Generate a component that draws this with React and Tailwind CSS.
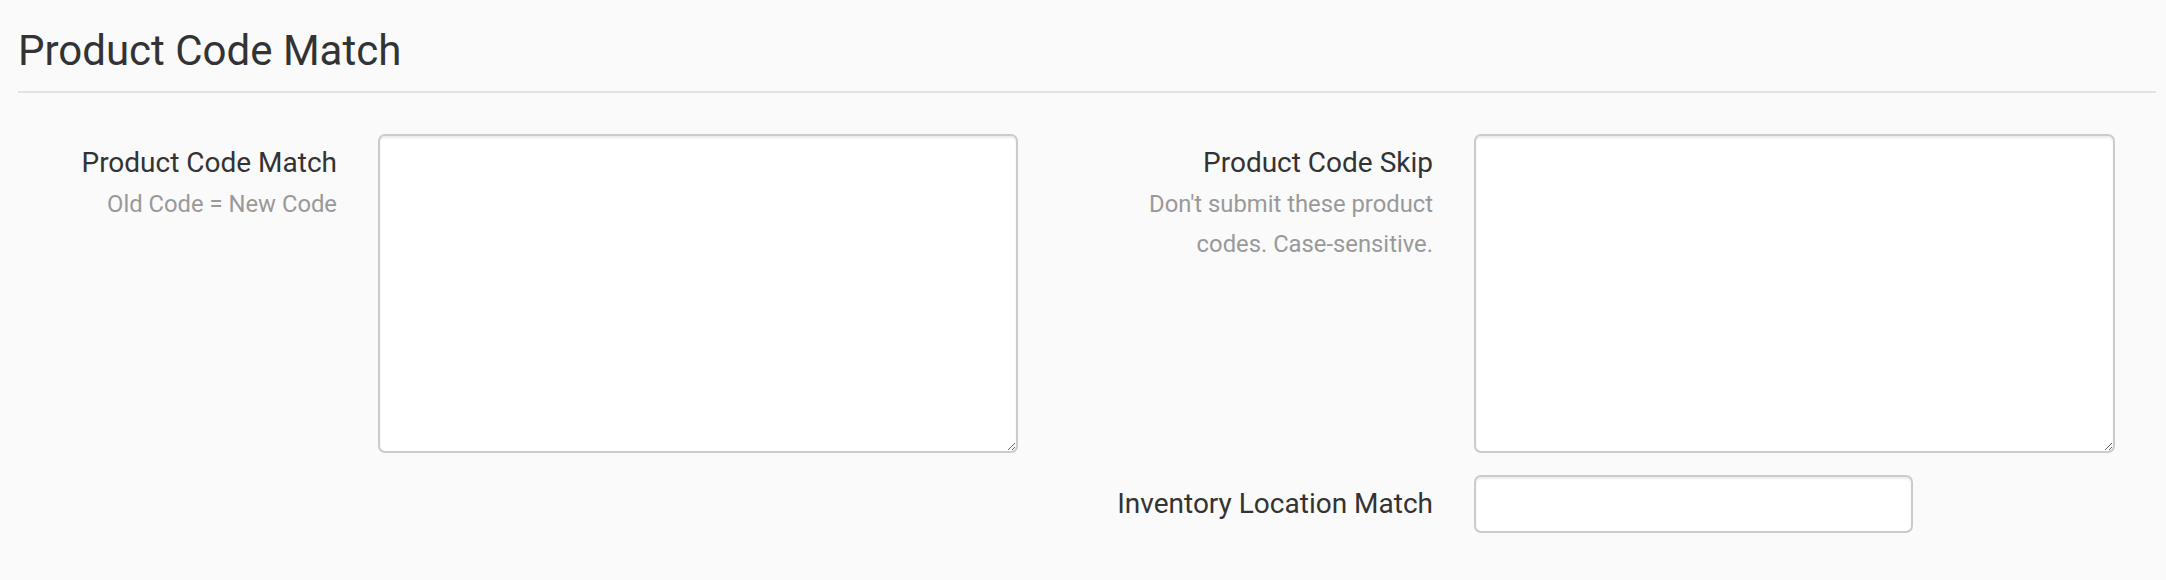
import React from "react";

const fieldCls =
  "block bg-white border-2 border-[#cbcbcb] rounded-[7px] shadow-[inset_0_2px_2px_rgba(0,0,0,0.075)] outline-none";

export default function App() {
  return (
    <div className="min-h-[580px] bg-[#fafafa] pl-[18px] pr-[10px] font-['Roboto','Liberation_Sans',sans-serif] text-[#333]">
      <h2 className="pt-[28px] pb-[17px] text-[42px] leading-[46px] font-normal border-b-2 border-[#e3e3e3]">
        Product Code Match
      </h2>
      <div className="mt-[41px] flex gap-[96px]">
        <div className="flex gap-[41px]">
          <div className="w-[319px] pt-[9px] text-right">
            <div className="text-[28px] leading-[40px] whitespace-nowrap">Product Code Match</div>
            <div className="mt-[1px] text-[23.8px] leading-[40px] text-[#999]">Old Code = New Code</div>
          </div>
          <textarea className={`${fieldCls} w-[640px] h-[319px] resize-y`} />
        </div>
        <div className="flex flex-col gap-[22px]">
          <div className="flex gap-[41px]">
            <div className="w-[319px] pt-[9px] text-right">
              <div className="text-[28px] leading-[40px] whitespace-nowrap">Product Code Skip</div>
              <div className="mt-[1px] text-[23.8px] leading-[40px] text-[#999]">
                Don't submit these product
                <br />
                codes. Case-sensitive.
              </div>
            </div>
            <textarea className={`${fieldCls} w-[641px] h-[319px] resize-y`} />
          </div>
          <div className="flex items-center gap-[41px]">
            <div className="w-[319px] text-right text-[28px] leading-[40px] whitespace-nowrap">
              Inventory Location Match
            </div>
            <input type="text" className={`${fieldCls} w-[439px] h-[58px]`} />
          </div>
        </div>
      </div>
    </div>
  );
}
